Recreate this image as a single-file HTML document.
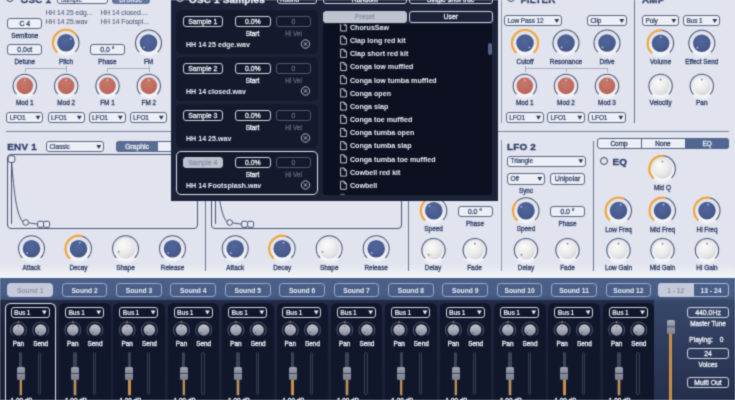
<!DOCTYPE html>
<html><head><meta charset="utf-8"><title>Synth</title><style>
html,body{margin:0;padding:0}
body{width:735px;height:400px;overflow:hidden;position:relative;background:#e1e4ee;font-family:"Liberation Sans",sans-serif;color:#34446b}
.layer{position:absolute;left:0;top:0;width:735px;height:400px;overflow:hidden}
.wrap{position:absolute;left:-10px;top:-10px;width:755px;height:420px;filter:url(#soft)}
.wrap>.layer{left:10px;top:10px}
.r{position:absolute}
.bx{position:absolute;box-sizing:border-box;border:1px solid #5b6684;border-radius:3px;background:#eceff5}
.bx.fill{background:#52668f;border-color:#52668f}
.bx.sq{border-radius:3px 0 0 3px}
.bx.sqr{border-radius:0 3px 3px 0}
.bx.dk{background:transparent;border-color:#d0d5e1}
.bx.dimb{border-color:#4f576c}
.bx.seld{background:#bfc3cf;border-color:#bfc3cf}
.bx.tab{background:transparent;border-color:#9aabcd;border-radius:3.5px}
.bx.tab.tsel{background:#c4cad9;border-color:#c4cad9}
.bx.tab.sq{border-radius:3px 0 0 3px}
text{font-family:"Liberation Sans",sans-serif;font-weight:normal;color:#34446b;fill:currentColor;stroke:currentColor;stroke-width:.32px;font-size:6.4px}
.lbw,.btw,.fnw,.li,.pl,.ddw,.ttlw{color:#eef0f6}
.dim{color:#59617a}
.lt,.btfill{color:#e9edf6}
.bt,.btw,.btdim,.btsel,.btfill{font-size:6.9px;stroke-width:.3px}
.bt{color:#3a4a70}
.btdim{color:#5d6579}
.btsel{color:#8d93a5}
.ddt{font-size:6.5px;letter-spacing:-.1px;stroke-width:.22px}
.ddw{font-size:6.4px;font-weight:bold;stroke-width:0;letter-spacing:-.2px;word-spacing:-.3px}
.fn{font-size:6.7px;color:#596584;stroke-width:.12px}
.fnw{font-size:7.1px;font-weight:bold;stroke-width:0}
.li{font-size:7.1px;font-weight:bold;stroke-width:0}
.pl{font-size:6.6px}
.tab{font-size:6.7px;color:#eef1f8;font-weight:bold;stroke-width:0}
.tabsel{font-size:6.7px;color:#8a93a8;font-weight:bold;stroke-width:0}
.ttl,.ttlw{font-size:9.9px;font-weight:bold;letter-spacing:.22px;stroke-width:.35px}
.ttl{color:#2f3f68}
</style></head><body>
<svg width="0" height="0" style="position:absolute"><defs><filter id="soft" x="0" y="0" width="100%" height="100%" color-interpolation-filters="sRGB"><feConvolveMatrix order="3" kernelMatrix="0.03 0.115 0.03 0.115 0.42 0.115 0.03 0.115 0.03" edgeMode="duplicate" preserveAlpha="true"/></filter></defs></svg>
<div class="wrap"><div class="r" style="left:0;top:0;width:755px;height:420px;background:#e1e4ee"></div><div class="layer" style="overflow:visible"><div class="r" style="left:0px;top:264px;width:735px;height:15px;background:linear-gradient(#e1e4ee,#f4f6fa)"></div><div class="r" style="left:6px;top:-6px;width:8px;height:8px;border:1px solid #34446b;border-radius:50%;box-sizing:border-box"></div><div class="bx " style="left:57px;top:-8px;width:50.5px;height:11.5px"></div><div class="bx fill" style="left:112px;top:-8px;width:37.5px;height:11.5px;background:#6276a0;border-color:#6276a0"></div><div class="r" style="left:507px;top:-6px;width:8px;height:8px;border:1px solid #34446b;border-radius:50%;box-sizing:border-box"></div><div class="bx " style="left:7.3px;top:17.8px;width:35px;height:11.2px;"></div><div class="bx " style="left:7.3px;top:44.3px;width:35px;height:11.2px;"></div><div class="bx " style="left:89.8px;top:44.3px;width:35.2px;height:11.2px;"></div><div class="r" style="left:24.5px;top:68.2px;width:42.5px;height:1px;background:#a9b0c4"></div><div class="r" style="left:24.5px;top:68.2px;width:1px;height:4px;background:#a9b0c4"></div><div class="r" style="left:66px;top:68.2px;width:1px;height:4px;background:#a9b0c4"></div><div class="r" style="left:66px;top:65.7px;width:1px;height:2.5px;background:#a9b0c4"></div><div class="r" style="left:107px;top:68.2px;width:42.5px;height:1px;background:#a9b0c4"></div><div class="r" style="left:107px;top:68.2px;width:1px;height:4px;background:#a9b0c4"></div><div class="r" style="left:148.5px;top:68.2px;width:1px;height:4px;background:#a9b0c4"></div><div class="r" style="left:148.5px;top:65.7px;width:1px;height:2.5px;background:#a9b0c4"></div><div class="bx " style="left:6.2px;top:112px;width:37px;height:11px"></div><div class="bx " style="left:47.5px;top:112px;width:37px;height:11px"></div><div class="bx " style="left:88.5px;top:112px;width:37px;height:11px"></div><div class="bx " style="left:129.5px;top:112px;width:37px;height:11px"></div><div class="r" style="left:6px;top:131.3px;width:166px;height:1px;background:#76819f"></div><div class="bx " style="left:46px;top:141px;width:58px;height:11.2px"></div><div class="r" style="left:116px;top:141px;width:86px;height:11.2px;border:1px solid #4f5f84;border-radius:3px;box-sizing:border-box;background:#eceff5"></div><div class="bx fill sq" style="left:116px;top:141px;width:42px;height:11.2px;background:#5a6c93;border-color:#5a6c93"></div><div class="r" style="left:7px;top:154px;width:191px;height:74.5px;border:1px solid #4a5674;border-radius:4px;box-sizing:border-box"></div><div class="r" style="left:211px;top:154px;width:191px;height:74.5px;border:1px solid #4a5674;border-radius:4px;box-sizing:border-box"></div><div class="r" style="left:204.5px;top:140px;width:1px;height:131px;background:#6a7593"></div><div class="r" style="left:408px;top:140px;width:1px;height:131px;background:#6a7593"></div><div class="bx " style="left:457.5px;top:206.3px;width:35px;height:10.5px;"></div><div class="r" style="left:501px;top:0px;width:1px;height:123px;background:#8d97b0"></div><div class="r" style="left:501px;top:140px;width:1px;height:131px;background:#8d97b0"></div><div class="bx " style="left:504px;top:15px;width:58px;height:11.2px"></div><div class="bx " style="left:587px;top:15px;width:40px;height:11.2px"></div><div class="r" style="left:524.8px;top:68.2px;width:83.20000000000005px;height:1px;background:#a9b0c4"></div><div class="r" style="left:524.8px;top:68.2px;width:1px;height:4px;background:#a9b0c4"></div><div class="r" style="left:566px;top:68.2px;width:1px;height:4px;background:#a9b0c4"></div><div class="r" style="left:607px;top:68.2px;width:1px;height:4px;background:#a9b0c4"></div><div class="r" style="left:524.8px;top:65.7px;width:1px;height:2.5px;background:#a9b0c4"></div><div class="bx " style="left:505.7px;top:112px;width:38px;height:11px"></div><div class="bx " style="left:547px;top:112px;width:38px;height:11px"></div><div class="bx " style="left:588px;top:112px;width:38px;height:11px"></div><div class="r" style="left:634px;top:0px;width:1px;height:123px;background:#6a7593"></div><div class="bx " style="left:642px;top:15px;width:37px;height:11.2px"></div><div class="bx " style="left:683px;top:15px;width:37px;height:11.2px"></div><div class="r" style="left:498px;top:130.6px;width:231px;height:1px;background:#76819f"></div><div class="bx " style="left:507px;top:155.5px;width:79px;height:11px"></div><div class="bx " style="left:507px;top:173px;width:38px;height:11.5px"></div><div class="bx " style="left:550px;top:173px;width:35px;height:11.5px;"></div><div class="bx " style="left:550px;top:206.3px;width:35px;height:10.5px;"></div><div class="r" style="left:593px;top:141px;width:1px;height:130px;background:#6a7593"></div><div class="r" style="left:597px;top:137.5px;width:131.5px;height:11.5px;border:1px solid #4f5f84;border-radius:3px;box-sizing:border-box;background:#eceff5"></div><div class="r" style="left:641px;top:137.5px;width:1px;height:11.5px;background:#4f5f84"></div><div class="bx fill sqr" style="left:685px;top:137.5px;width:43.5px;height:11.5px;"></div><div class="r" style="left:600.2px;top:157.2px;width:8px;height:8px;border:1px solid #34446b;border-radius:50%;box-sizing:border-box"></div></div>
<svg class="layer" width="735" height="400" viewBox="0 0 735 400"><defs>
<radialGradient id="gb" cx=".45" cy=".35" r=".75"><stop offset="0" stop-color="#51669c"/><stop offset=".7" stop-color="#475a8d"/><stop offset="1" stop-color="#3c4c7b"/></radialGradient>
<radialGradient id="gr" cx=".45" cy=".35" r=".75"><stop offset="0" stop-color="#c9786c"/><stop offset=".7" stop-color="#bd695d"/><stop offset="1" stop-color="#ab5c52"/></radialGradient>
<radialGradient id="gw" cx=".38" cy=".3" r=".8"><stop offset="0" stop-color="#fbfbfa"/><stop offset=".55" stop-color="#eaeae9"/><stop offset=".85" stop-color="#dbdbdf"/><stop offset="1" stop-color="#b6b8c4"/></radialGradient>
<linearGradient id="gg" x1="0" y1="0" x2="0" y2="1"><stop offset="0" stop-color="#c4c7ce"/><stop offset=".55" stop-color="#a3a7b2"/><stop offset="1" stop-color="#80859a"/></linearGradient>
<clipPath id="lc"><rect x="323" y="24" width="169" height="170.5"/></clipPath>
<filter id="bl" x="-50%" y="-50%" width="200%" height="200%"><feGaussianBlur stdDeviation="1.6"/></filter>
</defs><text class="ttl" x="20.50" y="2.50">OSC 1</text><text class="ddt" x="60.50" y="2.33">Sample</text><path d="M99.90 -3.95h4.8l-2.4 4z" fill="#2c3857"/><text class="btfill" x="130.75" y="2.47" text-anchor="middle">Browse</text><text class="ttl" x="520.50" y="2.50">FILTER</text><text class="ttl" x="642.00" y="2.50">AMP</text><text class="fn" x="45.50" y="15.10">HH 14 25 edg...</text><text class="fn" x="45.50" y="24.10">HH 14 25.wav</text><text class="fn" x="100.50" y="15.10">HH 14 closed....</text><text class="fn" x="100.50" y="24.10">HH 14 Footspl...</text><text class="bt" x="24.80" y="25.87" text-anchor="middle">C 4</text><text class="lb" x="24.80" y="37.59" text-anchor="middle">Semitone</text><text class="bt" x="24.80" y="52.37" text-anchor="middle">0.0ct</text><text class="lb" x="24.80" y="64.29" text-anchor="middle">Detune</text><ellipse cx="66" cy="46.3" rx="10.3" ry="9.3" fill="#fbfcff" opacity=".75" filter="url(#bl)"/><path d="M56.81 51.99A13 13 0 1 1 75.19 51.99" fill="none" stroke="#4a5472" stroke-width="1.05"/><path d="M56.81 51.99A13 13 0 1 1 75.66 34.10" fill="none" stroke="#f3a63c" stroke-width="2.2" stroke-linecap="round"/><circle cx="66" cy="42.8" r="8.8" fill="url(#gb)"/><circle cx="70.61" cy="38.65" r="0.9" fill="#aebcf0"/><text class="lb" x="66.00" y="64.29" text-anchor="middle">Pitch</text><text class="bt" x="107.40" y="52.37" text-anchor="middle">0.0 °</text><text class="lb" x="107.40" y="64.29" text-anchor="middle">Phase</text><ellipse cx="148.5" cy="46.5" rx="10.3" ry="9.3" fill="#fbfcff" opacity=".75" filter="url(#bl)"/><path d="M139.31 52.19A13 13 0 1 1 157.69 52.19" fill="none" stroke="#4a5472" stroke-width="1.05"/><circle cx="148.5" cy="43" r="8.8" fill="url(#gb)"/><circle cx="144.12" cy="47.38" r="0.9" fill="#aebcf0"/><text class="lb" x="148.50" y="64.29" text-anchor="middle">FM</text><ellipse cx="24.8" cy="89.4" rx="9.8" ry="8.8" fill="#fbfcff" opacity=".75" filter="url(#bl)"/><path d="M16.53 94.17A11.7 11.7 0 1 1 33.07 94.17" fill="none" stroke="#4a5472" stroke-width="1.05"/><circle cx="24.8" cy="85.9" r="8.3" fill="url(#gr)"/><circle cx="24.80" cy="80.20" r="0.9" fill="#efb3a2"/><text class="lb" x="24.80" y="105.19" text-anchor="middle">Mod 1</text><ellipse cx="66.2" cy="89.4" rx="9.8" ry="8.8" fill="#fbfcff" opacity=".75" filter="url(#bl)"/><path d="M57.93 94.17A11.7 11.7 0 1 1 74.47 94.17" fill="none" stroke="#4a5472" stroke-width="1.05"/><circle cx="66.2" cy="85.9" r="8.3" fill="url(#gr)"/><circle cx="66.20" cy="80.20" r="0.9" fill="#efb3a2"/><text class="lb" x="66.20" y="105.19" text-anchor="middle">Mod 2</text><ellipse cx="107.5" cy="89.4" rx="9.8" ry="8.8" fill="#fbfcff" opacity=".75" filter="url(#bl)"/><path d="M99.23 94.17A11.7 11.7 0 1 1 115.77 94.17" fill="none" stroke="#4a5472" stroke-width="1.05"/><circle cx="107.5" cy="85.9" r="8.3" fill="url(#gr)"/><circle cx="107.50" cy="80.20" r="0.9" fill="#efb3a2"/><text class="lb" x="107.50" y="105.19" text-anchor="middle">FM 1</text><ellipse cx="148.8" cy="89.4" rx="9.8" ry="8.8" fill="#fbfcff" opacity=".75" filter="url(#bl)"/><path d="M140.53 94.17A11.7 11.7 0 1 1 157.07 94.17" fill="none" stroke="#4a5472" stroke-width="1.05"/><circle cx="148.8" cy="85.9" r="8.3" fill="url(#gr)"/><circle cx="148.80" cy="80.20" r="0.9" fill="#efb3a2"/><text class="lb" x="148.80" y="105.19" text-anchor="middle">FM 2</text><text class="ddt" x="9.70" y="119.83">LFO1</text><path d="M35.60 115.80h4.8l-2.4 4z" fill="#2c3857"/><text class="ddt" x="51.00" y="119.83">LFO1</text><path d="M76.90 115.80h4.8l-2.4 4z" fill="#2c3857"/><text class="ddt" x="92.00" y="119.83">LFO1</text><path d="M117.90 115.80h4.8l-2.4 4z" fill="#2c3857"/><text class="ddt" x="133.00" y="119.83">LFO1</text><path d="M158.90 115.80h4.8l-2.4 4z" fill="#2c3857"/><text class="ttl" x="7.30" y="149.70">ENV 1</text><text class="ddt" x="49.50" y="148.93">Classic</text><path d="M96.40 144.90h4.8l-2.4 4z" fill="#2c3857"/><text class="btfill" x="137.00" y="149.07" text-anchor="middle">Graphic</text><g stroke="#4a5674" stroke-width="1" fill="none"><path d="M11.5 158.5V224"/><path d="M11.5 160C14 195 17 216 23 222"/><path d="M28.5 222.8L37.6 224.2"/></g><g stroke="#4a5674" stroke-width="1" fill="#e6e9f2"><rect x="8.2" y="155.8" width="6.6" height="6.6" rx="1.6"/><circle cx="25.7" cy="222.5" r="2.8"/><rect x="37.6" y="221.3" width="6" height="6" rx="1.5"/><rect x="43.6" y="221.3" width="6" height="6" rx="1.5"/></g><g stroke="#4a5674" stroke-width="1" fill="none"><path d="M215.5 158.5V224"/><path d="M215.5 160C218 195 221 216 227 222"/><path d="M232.5 222.8L241.6 224.2"/></g><g stroke="#4a5674" stroke-width="1" fill="#e6e9f2"><rect x="212.2" y="155.8" width="6.6" height="6.6" rx="1.6"/><circle cx="229.7" cy="222.5" r="2.8"/><rect x="241.6" y="221.3" width="6" height="6" rx="1.5"/><rect x="247.6" y="221.3" width="6" height="6" rx="1.5"/></g><ellipse cx="31.5" cy="252.2" rx="10.3" ry="9.3" fill="#fbfcff" opacity=".75" filter="url(#bl)"/><path d="M22.31 257.89A13 13 0 1 1 40.69 257.89" fill="none" stroke="#4a5472" stroke-width="1.05"/><circle cx="31.5" cy="248.7" r="8.8" fill="url(#gb)"/><circle cx="27.12" cy="253.08" r="0.9" fill="#aebcf0"/><text class="lb" x="31.50" y="269.99" text-anchor="middle">Attack</text><ellipse cx="78.5" cy="252.2" rx="10.3" ry="9.3" fill="#fbfcff" opacity=".75" filter="url(#bl)"/><path d="M69.31 257.89A13 13 0 1 1 87.69 257.89" fill="none" stroke="#4a5472" stroke-width="1.05"/><path d="M69.31 257.89A13 13 0 0 1 81.20 235.98" fill="none" stroke="#f3a63c" stroke-width="2.2" stroke-linecap="round"/><circle cx="78.5" cy="248.7" r="8.8" fill="url(#gb)"/><circle cx="79.79" cy="242.64" r="0.9" fill="#aebcf0"/><text class="lb" x="78.50" y="269.99" text-anchor="middle">Decay</text><ellipse cx="125.5" cy="252.2" rx="11.5" ry="10.5" fill="#fbfcff" opacity=".75" filter="url(#bl)"/><path d="M116.31 257.89A13 13 0 1 1 134.69 257.89" fill="none" stroke="#4a5472" stroke-width="1.05"/><circle cx="125.5" cy="248.7" r="10" fill="url(#gw)"/><circle cx="118.79" cy="251.83" r="0.9" fill="#7d8496"/><text class="lb" x="125.50" y="269.99" text-anchor="middle">Shape</text><ellipse cx="172.5" cy="252.2" rx="10.3" ry="9.3" fill="#fbfcff" opacity=".75" filter="url(#bl)"/><path d="M163.31 257.89A13 13 0 1 1 181.69 257.89" fill="none" stroke="#4a5472" stroke-width="1.05"/><circle cx="172.5" cy="248.7" r="8.8" fill="url(#gb)"/><circle cx="168.12" cy="253.08" r="0.9" fill="#aebcf0"/><text class="lb" x="172.50" y="269.99" text-anchor="middle">Release</text><ellipse cx="235.2" cy="252.2" rx="10.3" ry="9.3" fill="#fbfcff" opacity=".75" filter="url(#bl)"/><path d="M226.01 257.89A13 13 0 1 1 244.39 257.89" fill="none" stroke="#4a5472" stroke-width="1.05"/><circle cx="235.2" cy="248.7" r="8.8" fill="url(#gb)"/><circle cx="230.82" cy="253.08" r="0.9" fill="#aebcf0"/><text class="lb" x="235.20" y="269.99" text-anchor="middle">Attack</text><ellipse cx="282.2" cy="252.2" rx="10.3" ry="9.3" fill="#fbfcff" opacity=".75" filter="url(#bl)"/><path d="M273.01 257.89A13 13 0 1 1 291.39 257.89" fill="none" stroke="#4a5472" stroke-width="1.05"/><path d="M273.01 257.89A13 13 0 0 1 284.90 235.98" fill="none" stroke="#f3a63c" stroke-width="2.2" stroke-linecap="round"/><circle cx="282.2" cy="248.7" r="8.8" fill="url(#gb)"/><circle cx="283.49" cy="242.64" r="0.9" fill="#aebcf0"/><text class="lb" x="282.20" y="269.99" text-anchor="middle">Decay</text><ellipse cx="329.2" cy="252.2" rx="11.5" ry="10.5" fill="#fbfcff" opacity=".75" filter="url(#bl)"/><path d="M320.01 257.89A13 13 0 1 1 338.39 257.89" fill="none" stroke="#4a5472" stroke-width="1.05"/><circle cx="329.2" cy="248.7" r="10" fill="url(#gw)"/><circle cx="322.49" cy="251.83" r="0.9" fill="#7d8496"/><text class="lb" x="329.20" y="269.99" text-anchor="middle">Shape</text><ellipse cx="376.2" cy="252.2" rx="10.3" ry="9.3" fill="#fbfcff" opacity=".75" filter="url(#bl)"/><path d="M367.01 257.89A13 13 0 1 1 385.39 257.89" fill="none" stroke="#4a5472" stroke-width="1.05"/><circle cx="376.2" cy="248.7" r="8.8" fill="url(#gb)"/><circle cx="371.82" cy="253.08" r="0.9" fill="#aebcf0"/><text class="lb" x="376.20" y="269.99" text-anchor="middle">Release</text><ellipse cx="433.8" cy="214.2" rx="10.3" ry="9.3" fill="#fbfcff" opacity=".75" filter="url(#bl)"/><path d="M424.61 219.89A13 13 0 1 1 442.99 219.89" fill="none" stroke="#4a5472" stroke-width="1.05"/><path d="M424.61 219.89A13 13 0 0 1 425.10 201.04" fill="none" stroke="#f3a63c" stroke-width="2.2" stroke-linecap="round"/><circle cx="433.8" cy="210.7" r="8.8" fill="url(#gb)"/><circle cx="429.65" cy="206.09" r="0.9" fill="#aebcf0"/><text class="lb" x="433.60" y="231.49" text-anchor="middle">Speed</text><text class="bt" x="475.00" y="214.02" text-anchor="middle">0.0 °</text><text class="lb" x="475.00" y="225.59" text-anchor="middle">Phase</text><ellipse cx="433.5" cy="253.7" rx="10.6" ry="9.6" fill="#fbfcff" opacity=".75" filter="url(#bl)"/><path d="M425.23 258.47A11.7 11.7 0 1 1 441.77 258.47" fill="none" stroke="#4a5472" stroke-width="1.05"/><circle cx="433.5" cy="250.2" r="9.1" fill="url(#gw)"/><circle cx="428.90" cy="254.80" r="0.9" fill="#7d8496"/><text class="lb" x="433.00" y="269.79" text-anchor="middle">Delay</text><ellipse cx="474.8" cy="253.7" rx="10.6" ry="9.6" fill="#fbfcff" opacity=".75" filter="url(#bl)"/><path d="M466.53 258.47A11.7 11.7 0 1 1 483.07 258.47" fill="none" stroke="#4a5472" stroke-width="1.05"/><circle cx="474.8" cy="250.2" r="9.1" fill="url(#gw)"/><circle cx="474.80" cy="243.70" r="0.9" fill="#7d8496"/><text class="lb" x="474.50" y="269.79" text-anchor="middle">Fade</text><text class="ddt" x="507.50" y="22.93">Low Pass 12</text><path d="M554.40 18.90h4.8l-2.4 4z" fill="#2c3857"/><text class="ddt" x="590.50" y="22.93">Clip</text><path d="M619.40 18.90h4.8l-2.4 4z" fill="#2c3857"/><ellipse cx="525" cy="46.5" rx="10.3" ry="9.3" fill="#fbfcff" opacity=".75" filter="url(#bl)"/><path d="M515.81 52.19A13 13 0 1 1 534.19 52.19" fill="none" stroke="#4a5472" stroke-width="1.05"/><path d="M515.81 52.19A13 13 0 1 1 534.19 52.19" fill="none" stroke="#f3a63c" stroke-width="2.2" stroke-linecap="round"/><circle cx="525" cy="43" r="8.8" fill="url(#gb)"/><circle cx="529.38" cy="47.38" r="0.9" fill="#aebcf0"/><text class="lb" x="525.00" y="64.29" text-anchor="middle">Cutoff</text><ellipse cx="566" cy="46.5" rx="10.3" ry="9.3" fill="#fbfcff" opacity=".75" filter="url(#bl)"/><path d="M556.81 52.19A13 13 0 1 1 575.19 52.19" fill="none" stroke="#4a5472" stroke-width="1.05"/><circle cx="566" cy="43" r="8.8" fill="url(#gb)"/><circle cx="561.62" cy="47.38" r="0.9" fill="#aebcf0"/><text class="lb" x="566.00" y="64.29" text-anchor="middle">Resonance</text><ellipse cx="607" cy="46.5" rx="10.3" ry="9.3" fill="#fbfcff" opacity=".75" filter="url(#bl)"/><path d="M597.81 52.19A13 13 0 1 1 616.19 52.19" fill="none" stroke="#4a5472" stroke-width="1.05"/><circle cx="607" cy="43" r="8.8" fill="url(#gb)"/><circle cx="602.62" cy="47.38" r="0.9" fill="#aebcf0"/><text class="lb" x="607.00" y="64.29" text-anchor="middle">Drive</text><ellipse cx="524.8" cy="89.4" rx="9.8" ry="8.8" fill="#fbfcff" opacity=".75" filter="url(#bl)"/><path d="M516.53 94.17A11.7 11.7 0 1 1 533.07 94.17" fill="none" stroke="#4a5472" stroke-width="1.05"/><circle cx="524.8" cy="85.9" r="8.3" fill="url(#gr)"/><circle cx="524.80" cy="80.20" r="0.9" fill="#efb3a2"/><text class="lb" x="524.80" y="105.19" text-anchor="middle">Mod 1</text><ellipse cx="566" cy="89.4" rx="9.8" ry="8.8" fill="#fbfcff" opacity=".75" filter="url(#bl)"/><path d="M557.73 94.17A11.7 11.7 0 1 1 574.27 94.17" fill="none" stroke="#4a5472" stroke-width="1.05"/><circle cx="566" cy="85.9" r="8.3" fill="url(#gr)"/><circle cx="566.00" cy="80.20" r="0.9" fill="#efb3a2"/><text class="lb" x="566.00" y="105.19" text-anchor="middle">Mod 2</text><ellipse cx="607" cy="89.4" rx="9.8" ry="8.8" fill="#fbfcff" opacity=".75" filter="url(#bl)"/><path d="M598.73 94.17A11.7 11.7 0 1 1 615.27 94.17" fill="none" stroke="#4a5472" stroke-width="1.05"/><circle cx="607" cy="85.9" r="8.3" fill="url(#gr)"/><circle cx="607.00" cy="80.20" r="0.9" fill="#efb3a2"/><text class="lb" x="607.00" y="105.19" text-anchor="middle">Mod 3</text><text class="ddt" x="509.20" y="119.83">LFO1</text><path d="M536.10 115.80h4.8l-2.4 4z" fill="#2c3857"/><text class="ddt" x="550.50" y="119.83">LFO1</text><path d="M577.40 115.80h4.8l-2.4 4z" fill="#2c3857"/><text class="ddt" x="591.50" y="119.83">LFO1</text><path d="M618.40 115.80h4.8l-2.4 4z" fill="#2c3857"/><text class="ddt" x="645.50" y="22.93">Poly</text><path d="M671.40 18.90h4.8l-2.4 4z" fill="#2c3857"/><text class="ddt" x="686.50" y="22.93">Bus 1</text><path d="M712.40 18.90h4.8l-2.4 4z" fill="#2c3857"/><ellipse cx="660.6" cy="46.8" rx="10.3" ry="9.3" fill="#fbfcff" opacity=".75" filter="url(#bl)"/><path d="M651.41 52.49A13 13 0 1 1 669.79 52.49" fill="none" stroke="#4a5472" stroke-width="1.05"/><path d="M651.41 52.49A13 13 0 0 1 661.05 30.31" fill="none" stroke="#f3a63c" stroke-width="2.2" stroke-linecap="round"/><circle cx="660.6" cy="43.3" r="8.8" fill="url(#gb)"/><circle cx="660.82" cy="37.10" r="0.9" fill="#aebcf0"/><text class="lb" x="660.60" y="64.29" text-anchor="middle">Volume</text><ellipse cx="701.8" cy="46.8" rx="10.3" ry="9.3" fill="#fbfcff" opacity=".75" filter="url(#bl)"/><path d="M692.61 52.49A13 13 0 1 1 710.99 52.49" fill="none" stroke="#4a5472" stroke-width="1.05"/><circle cx="701.8" cy="43.3" r="8.8" fill="url(#gb)"/><circle cx="697.42" cy="47.68" r="0.9" fill="#aebcf0"/><text class="lb" x="701.80" y="64.29" text-anchor="middle">Effect Send</text><ellipse cx="660.6" cy="89.5" rx="10.6" ry="9.6" fill="#fbfcff" opacity=".75" filter="url(#bl)"/><path d="M652.33 94.27A11.7 11.7 0 1 1 668.87 94.27" fill="none" stroke="#4a5472" stroke-width="1.05"/><circle cx="660.6" cy="86" r="9.1" fill="url(#gw)"/><circle cx="660.60" cy="79.50" r="0.9" fill="#7d8496"/><text class="lb" x="660.60" y="104.89" text-anchor="middle">Velocity</text><ellipse cx="701.8" cy="89.5" rx="10.6" ry="9.6" fill="#fbfcff" opacity=".75" filter="url(#bl)"/><path d="M693.53 94.27A11.7 11.7 0 1 1 710.07 94.27" fill="none" stroke="#4a5472" stroke-width="1.05"/><circle cx="701.8" cy="86" r="9.1" fill="url(#gw)"/><circle cx="701.80" cy="79.50" r="0.9" fill="#7d8496"/><text class="lb" x="701.80" y="104.89" text-anchor="middle">Pan</text><text class="ttl" x="507.00" y="149.70">LFO 2</text><text class="ddt" x="510.50" y="163.33">Triangle</text><path d="M578.40 159.30h4.8l-2.4 4z" fill="#2c3857"/><text class="ddt" x="510.50" y="181.08">Off</text><path d="M537.40 177.05h4.8l-2.4 4z" fill="#2c3857"/><text class="bt" x="567.50" y="181.22" text-anchor="middle">Unipolar</text><text class="lb" x="526.00" y="193.29" text-anchor="middle">Sync</text><ellipse cx="526" cy="214.2" rx="10.3" ry="9.3" fill="#fbfcff" opacity=".75" filter="url(#bl)"/><path d="M516.81 219.89A13 13 0 1 1 535.19 219.89" fill="none" stroke="#4a5472" stroke-width="1.05"/><path d="M516.81 219.89A13 13 0 0 1 516.04 202.34" fill="none" stroke="#f3a63c" stroke-width="2.2" stroke-linecap="round"/><circle cx="526" cy="210.7" r="8.8" fill="url(#gb)"/><circle cx="521.25" cy="206.71" r="0.9" fill="#aebcf0"/><text class="lb" x="526.00" y="231.49" text-anchor="middle">Speed</text><text class="bt" x="567.50" y="214.02" text-anchor="middle">0.0 °</text><text class="lb" x="567.50" y="225.59" text-anchor="middle">Phase</text><ellipse cx="526" cy="253.7" rx="10.6" ry="9.6" fill="#fbfcff" opacity=".75" filter="url(#bl)"/><path d="M517.73 258.47A11.7 11.7 0 1 1 534.27 258.47" fill="none" stroke="#4a5472" stroke-width="1.05"/><circle cx="526" cy="250.2" r="9.1" fill="url(#gw)"/><circle cx="521.40" cy="254.80" r="0.9" fill="#7d8496"/><text class="lb" x="526.00" y="269.79" text-anchor="middle">Delay</text><ellipse cx="567.5" cy="253.7" rx="10.6" ry="9.6" fill="#fbfcff" opacity=".75" filter="url(#bl)"/><path d="M559.23 258.47A11.7 11.7 0 1 1 575.77 258.47" fill="none" stroke="#4a5472" stroke-width="1.05"/><circle cx="567.5" cy="250.2" r="9.1" fill="url(#gw)"/><circle cx="567.50" cy="243.70" r="0.9" fill="#7d8496"/><text class="lb" x="567.50" y="269.79" text-anchor="middle">Fade</text><text class="lb" x="619.00" y="145.79" text-anchor="middle">Comp</text><text class="lb" x="663.00" y="145.79" text-anchor="middle">None</text><text class="lt" x="707.00" y="145.79" text-anchor="middle">EQ</text><text class="ttl" x="612.50" y="164.60">EQ</text><ellipse cx="662.4" cy="172.3" rx="11.3" ry="10.3" fill="#fbfcff" opacity=".75" filter="url(#bl)"/><path d="M653.21 177.99A13 13 0 1 1 671.59 177.99" fill="none" stroke="#4a5472" stroke-width="1.05"/><path d="M653.21 177.99A13 13 0 0 1 662.40 155.80" fill="none" stroke="#f3a63c" stroke-width="2.2" stroke-linecap="round"/><circle cx="662.4" cy="168.8" r="9.8" fill="url(#gw)"/><circle cx="662.40" cy="161.60" r="0.9" fill="#7d8496"/><text class="lb" x="662.40" y="190.49" text-anchor="middle">Mid Q</text><ellipse cx="618.5" cy="214.1" rx="10.3" ry="9.3" fill="#fbfcff" opacity=".75" filter="url(#bl)"/><path d="M609.31 219.79A13 13 0 1 1 627.69 219.79" fill="none" stroke="#4a5472" stroke-width="1.05"/><path d="M609.31 219.79A13 13 0 0 1 622.95 198.38" fill="none" stroke="#f3a63c" stroke-width="2.2" stroke-linecap="round"/><circle cx="618.5" cy="210.6" r="8.8" fill="url(#gb)"/><circle cx="620.62" cy="204.77" r="0.9" fill="#aebcf0"/><text class="lb" x="618.50" y="231.59" text-anchor="middle">Low Freq</text><ellipse cx="662.5" cy="214.1" rx="10.3" ry="9.3" fill="#fbfcff" opacity=".75" filter="url(#bl)"/><path d="M653.31 219.79A13 13 0 1 1 671.69 219.79" fill="none" stroke="#4a5472" stroke-width="1.05"/><path d="M653.31 219.79A13 13 0 0 1 664.76 197.80" fill="none" stroke="#f3a63c" stroke-width="2.2" stroke-linecap="round"/><circle cx="662.5" cy="210.6" r="8.8" fill="url(#gb)"/><circle cx="663.58" cy="204.49" r="0.9" fill="#aebcf0"/><text class="lb" x="662.50" y="231.59" text-anchor="middle">Mid Freq</text><ellipse cx="707" cy="214.1" rx="10.3" ry="9.3" fill="#fbfcff" opacity=".75" filter="url(#bl)"/><path d="M697.81 219.79A13 13 0 1 1 716.19 219.79" fill="none" stroke="#4a5472" stroke-width="1.05"/><path d="M697.81 219.79A13 13 0 0 1 709.26 197.80" fill="none" stroke="#f3a63c" stroke-width="2.2" stroke-linecap="round"/><circle cx="707" cy="210.6" r="8.8" fill="url(#gb)"/><circle cx="708.08" cy="204.49" r="0.9" fill="#aebcf0"/><text class="lb" x="707.00" y="231.59" text-anchor="middle">Hi Freq</text><ellipse cx="618.5" cy="253.7" rx="10.6" ry="9.6" fill="#fbfcff" opacity=".75" filter="url(#bl)"/><path d="M610.23 258.47A11.7 11.7 0 1 1 626.77 258.47" fill="none" stroke="#4a5472" stroke-width="1.05"/><circle cx="618.5" cy="250.2" r="9.1" fill="url(#gw)"/><circle cx="618.50" cy="243.70" r="0.9" fill="#7d8496"/><text class="lb" x="618.50" y="269.89" text-anchor="middle">Low Gain</text><ellipse cx="662.5" cy="253.7" rx="10.6" ry="9.6" fill="#fbfcff" opacity=".75" filter="url(#bl)"/><path d="M654.23 258.47A11.7 11.7 0 1 1 670.77 258.47" fill="none" stroke="#4a5472" stroke-width="1.05"/><circle cx="662.5" cy="250.2" r="9.1" fill="url(#gw)"/><circle cx="662.50" cy="243.70" r="0.9" fill="#7d8496"/><text class="lb" x="662.50" y="269.89" text-anchor="middle">Mid Gain</text><ellipse cx="707" cy="253.7" rx="10.6" ry="9.6" fill="#fbfcff" opacity=".75" filter="url(#bl)"/><path d="M698.73 258.47A11.7 11.7 0 1 1 715.27 258.47" fill="none" stroke="#4a5472" stroke-width="1.05"/><circle cx="707" cy="250.2" r="9.1" fill="url(#gw)"/><circle cx="707.00" cy="243.70" r="0.9" fill="#7d8496"/><text class="lb" x="707.00" y="269.89" text-anchor="middle">Hi Gain</text></svg>
<div class="layer"><div class="r" style="left:170.5px;top:-5px;width:327.5px;height:205.5px;background:#1c2338"></div><div class="r" style="left:176px;top:-6px;width:8px;height:8px;border:1px solid #e6e9f2;border-radius:50%;box-sizing:border-box"></div><div class="bx dk" style="left:276.5px;top:-8px;width:40px;height:11.5px"></div><div class="bx dk" style="left:323px;top:-8px;width:83.5px;height:11.5px;"></div><div class="bx dk" style="left:409px;top:-8px;width:83.5px;height:11.5px;"></div><div class="r" style="left:176px;top:10px;width:141.5px;height:43.5px;background:#141a2c;border-radius:5px;"></div><div class="bx dk" style="left:182.5px;top:16.2px;width:40.5px;height:11.3px;"></div><div class="bx dk" style="left:235px;top:16.2px;width:35.5px;height:11.3px;"></div><div class="bx dk dimb" style="left:276px;top:16.2px;width:35px;height:11.3px;"></div><div class="r" style="left:176px;top:57px;width:141.5px;height:43.5px;background:#141a2c;border-radius:5px;"></div><div class="bx dk" style="left:182.5px;top:63.2px;width:40.5px;height:11.3px;"></div><div class="bx dk" style="left:235px;top:63.2px;width:35.5px;height:11.3px;"></div><div class="bx dk dimb" style="left:276px;top:63.2px;width:35px;height:11.3px;"></div><div class="r" style="left:176px;top:104px;width:141.5px;height:43.5px;background:#141a2c;border-radius:5px;"></div><div class="bx dk" style="left:182.5px;top:110.2px;width:40.5px;height:11.3px;"></div><div class="bx dk" style="left:235px;top:110.2px;width:35.5px;height:11.3px;"></div><div class="bx dk dimb" style="left:276px;top:110.2px;width:35px;height:11.3px;"></div><div class="r" style="left:176px;top:151.3px;width:141.5px;height:43.9px;background:#141a2c;border-radius:5px;border:1px solid #dfe3ee;box-sizing:border-box;"></div><div class="bx seld" style="left:182.5px;top:157.2px;width:40.5px;height:11.3px;"></div><div class="bx dk" style="left:235px;top:157.2px;width:35.5px;height:11.3px;"></div><div class="bx dk dimb" style="left:276px;top:157.2px;width:35px;height:11.3px;"></div><div class="bx seld" style="left:323px;top:11.1px;width:83.5px;height:11.5px;"></div><div class="bx dk" style="left:409px;top:11.3px;width:83.5px;height:11.3px;"></div><div class="r" style="left:323px;top:24px;width:169px;height:170.5px;background:#0c1020;border-radius:0 0 3px 3px"></div><div class="r" style="left:488px;top:43px;width:3.5px;height:11.5px;background:#52628a;border-radius:2px"></div></div>
<svg class="layer" width="735" height="400" viewBox="0 0 735 400"><text class="ttlw" x="189.00" y="2.70">OSC 1 Samples</text><text class="ddw" x="280.00" y="2.29">Round</text><path d="M308.90 -3.95h4.8l-2.4 4z" fill="#eef0f6"/><text class="btw" x="364.75" y="2.47" text-anchor="middle">Random</text><text class="btw" x="450.75" y="2.47" text-anchor="middle">Single shot true</text><text class="btw" x="202.75" y="24.32" text-anchor="middle">Sample 1</text><text class="btw" x="252.75" y="24.32" text-anchor="middle">0.0%</text><text class="btdim" x="293.50" y="24.32" text-anchor="middle">0</text><text class="lbw" x="252.50" y="35.59" text-anchor="middle">Start</text><text class="dim" x="293.50" y="35.59" text-anchor="middle">Hi Vel</text><text class="fnw" x="186.00" y="46.74">HH 14 25 edge.wav</text><g stroke="#c9cedb" stroke-width="0.85" fill="none"><circle cx="305.5" cy="44" r="4.2"/><path d="M303.6 42.1l3.8 3.8M307.4 42.1l-3.8 3.8"/></g><text class="btw" x="202.75" y="71.32" text-anchor="middle">Sample 2</text><text class="btw" x="252.75" y="71.32" text-anchor="middle">0.0%</text><text class="btdim" x="293.50" y="71.32" text-anchor="middle">0</text><text class="lbw" x="252.50" y="82.59" text-anchor="middle">Start</text><text class="dim" x="293.50" y="82.59" text-anchor="middle">Hi Vel</text><text class="fnw" x="186.00" y="93.74">HH 14 closed.wav</text><g stroke="#c9cedb" stroke-width="0.85" fill="none"><circle cx="305.5" cy="91" r="4.2"/><path d="M303.6 89.1l3.8 3.8M307.4 89.1l-3.8 3.8"/></g><text class="btw" x="202.75" y="118.32" text-anchor="middle">Sample 3</text><text class="btw" x="252.75" y="118.32" text-anchor="middle">0.0%</text><text class="btdim" x="293.50" y="118.32" text-anchor="middle">0</text><text class="lbw" x="252.50" y="129.59" text-anchor="middle">Start</text><text class="dim" x="293.50" y="129.59" text-anchor="middle">Hi Vel</text><text class="fnw" x="186.00" y="140.74">HH 14 25.wav</text><g stroke="#c9cedb" stroke-width="0.85" fill="none"><circle cx="305.5" cy="138" r="4.2"/><path d="M303.6 136.1l3.8 3.8M307.4 136.1l-3.8 3.8"/></g><text class="btsel" x="202.75" y="165.32" text-anchor="middle">Sample 4</text><text class="btw" x="252.75" y="165.32" text-anchor="middle">0.0%</text><text class="btdim" x="293.50" y="165.32" text-anchor="middle">0</text><text class="lbw" x="252.50" y="176.59" text-anchor="middle">Start</text><text class="dim" x="293.50" y="176.59" text-anchor="middle">Hi Vel</text><text class="fnw" x="186.00" y="187.74">HH 14 Footsplash.wav</text><g stroke="#c9cedb" stroke-width="0.85" fill="none"><circle cx="305.5" cy="185" r="4.2"/><path d="M303.6 183.1l3.8 3.8M307.4 183.1l-3.8 3.8"/></g><text class="btsel" x="364.75" y="19.32" text-anchor="middle">Preset</text><text class="btw" x="450.75" y="19.42" text-anchor="middle">User</text><g clip-path="url(#lc)"><text class="li" x="350.00" y="29.74">ChorusSaw</text><path d="M340.6 22.90h3.5l2.3 2.3v5.8h-5.8zM344.1 22.90v2.3h2.3" fill="none" stroke="#dfe3ec" stroke-width="0.85" stroke-linejoin="round"/><text class="li" x="350.00" y="42.93">Clap long red kit</text><path d="M340.6 36.09h3.5l2.3 2.3v5.8h-5.8zM344.1 36.09v2.3h2.3" fill="none" stroke="#dfe3ec" stroke-width="0.85" stroke-linejoin="round"/><text class="li" x="350.00" y="56.12">Clap short red kit</text><path d="M340.6 49.28h3.5l2.3 2.3v5.8h-5.8zM344.1 49.28v2.3h2.3" fill="none" stroke="#dfe3ec" stroke-width="0.85" stroke-linejoin="round"/><text class="li" x="350.00" y="69.31">Conga low muffled</text><path d="M340.6 62.47h3.5l2.3 2.3v5.8h-5.8zM344.1 62.47v2.3h2.3" fill="none" stroke="#dfe3ec" stroke-width="0.85" stroke-linejoin="round"/><text class="li" x="350.00" y="82.50">Conga low tumba muffled</text><path d="M340.6 75.66h3.5l2.3 2.3v5.8h-5.8zM344.1 75.66v2.3h2.3" fill="none" stroke="#dfe3ec" stroke-width="0.85" stroke-linejoin="round"/><text class="li" x="350.00" y="95.69">Conga open</text><path d="M340.6 88.85h3.5l2.3 2.3v5.8h-5.8zM344.1 88.85v2.3h2.3" fill="none" stroke="#dfe3ec" stroke-width="0.85" stroke-linejoin="round"/><text class="li" x="350.00" y="108.88">Conga slap</text><path d="M340.6 102.04h3.5l2.3 2.3v5.8h-5.8zM344.1 102.04v2.3h2.3" fill="none" stroke="#dfe3ec" stroke-width="0.85" stroke-linejoin="round"/><text class="li" x="350.00" y="122.07">Conga toe muffled</text><path d="M340.6 115.23h3.5l2.3 2.3v5.8h-5.8zM344.1 115.23v2.3h2.3" fill="none" stroke="#dfe3ec" stroke-width="0.85" stroke-linejoin="round"/><text class="li" x="350.00" y="135.26">Conga tumba open</text><path d="M340.6 128.42h3.5l2.3 2.3v5.8h-5.8zM344.1 128.42v2.3h2.3" fill="none" stroke="#dfe3ec" stroke-width="0.85" stroke-linejoin="round"/><text class="li" x="350.00" y="148.45">Conga tumba slap</text><path d="M340.6 141.61h3.5l2.3 2.3v5.8h-5.8zM344.1 141.61v2.3h2.3" fill="none" stroke="#dfe3ec" stroke-width="0.85" stroke-linejoin="round"/><text class="li" x="350.00" y="161.64">Conga tumba toe muffled</text><path d="M340.6 154.80h3.5l2.3 2.3v5.8h-5.8zM344.1 154.80v2.3h2.3" fill="none" stroke="#dfe3ec" stroke-width="0.85" stroke-linejoin="round"/><text class="li" x="350.00" y="174.83">Cowbell red kit</text><path d="M340.6 167.99h3.5l2.3 2.3v5.8h-5.8zM344.1 167.99v2.3h2.3" fill="none" stroke="#dfe3ec" stroke-width="0.85" stroke-linejoin="round"/><text class="li" x="350.00" y="188.02">Cowbell</text><path d="M340.6 181.18h3.5l2.3 2.3v5.8h-5.8zM344.1 181.18v2.3h2.3" fill="none" stroke="#dfe3ec" stroke-width="0.85" stroke-linejoin="round"/><text class="li" x="350.00" y="201.21">Cowbell muffled</text><path d="M340.6 194.37h3.5l2.3 2.3v5.8h-5.8zM344.1 194.37v2.3h2.3" fill="none" stroke="#dfe3ec" stroke-width="0.85" stroke-linejoin="round"/></g></svg>
<div class="layer"><div class="r" style="left:0px;top:278.3px;width:735px;height:21.4px;background:linear-gradient(#4b6089,#495e86 75%,#3d4f76)"></div><div class="r" style="left:0px;top:299.7px;width:735px;height:101px;background:linear-gradient(#222b47,#1c233c 25%,#191f36)"></div><div class="r" style="left:654px;top:300px;width:81px;height:100px;background:linear-gradient(#374869,#323f60 30%,#242f4b)"></div><div class="bx tab tsel" style="left:7.3px;top:283.3px;width:45.8px;height:13.7px;"></div><div class="r" style="left:4.6px;top:302.8px;width:51.5px;height:100px;background:#11172b;border-radius:5.5px 5.5px 0 0;border:1px solid #e1e5ef;border-bottom:none;box-sizing:border-box;"></div><div class="bx dk" style="left:10.5px;top:306.7px;width:39px;height:11.2px"></div><div class="r" style="left:18.8px;top:352px;width:3.6px;height:44px;background:#3a4358;border-radius:2px"></div><div class="r" style="left:19.5px;top:379px;width:2.3px;height:16px;background:#cb8f48"></div><div class="r" style="left:16.6px;top:366.5px;width:8px;height:13.5px;background:linear-gradient(#9ea3ad,#84899a 45%,#4a4f5e 50%,#8b909e 55%,#777c8b);border-radius:1.5px"></div><div class="r" style="left:38.1px;top:352px;width:3.4px;height:42.5px;border:0.8px solid #353e55;border-radius:2px;box-sizing:border-box;background:#141a2c"></div><div class="bx tab" style="left:61.7px;top:283.3px;width:45.8px;height:13.7px;"></div><div class="r" style="left:59.0px;top:302.8px;width:51.5px;height:100px;background:#11172b;border-radius:5.5px 5.5px 0 0;"></div><div class="bx dk" style="left:64.9px;top:306.7px;width:39px;height:11.2px"></div><div class="r" style="left:73.2px;top:352px;width:3.6px;height:44px;background:#3a4358;border-radius:2px"></div><div class="r" style="left:73.9px;top:379px;width:2.3px;height:16px;background:#cb8f48"></div><div class="r" style="left:71.0px;top:366.5px;width:8px;height:13.5px;background:linear-gradient(#9ea3ad,#84899a 45%,#4a4f5e 50%,#8b909e 55%,#777c8b);border-radius:1.5px"></div><div class="r" style="left:92.5px;top:352px;width:3.4px;height:42.5px;border:0.8px solid #353e55;border-radius:2px;box-sizing:border-box;background:#141a2c"></div><div class="bx tab" style="left:116.1px;top:283.3px;width:45.8px;height:13.7px;"></div><div class="r" style="left:113.4px;top:302.8px;width:51.5px;height:100px;background:#11172b;border-radius:5.5px 5.5px 0 0;"></div><div class="bx dk" style="left:119.3px;top:306.7px;width:39px;height:11.2px"></div><div class="r" style="left:127.6px;top:352px;width:3.6px;height:44px;background:#3a4358;border-radius:2px"></div><div class="r" style="left:128.3px;top:379px;width:2.3px;height:16px;background:#cb8f48"></div><div class="r" style="left:125.4px;top:366.5px;width:8px;height:13.5px;background:linear-gradient(#9ea3ad,#84899a 45%,#4a4f5e 50%,#8b909e 55%,#777c8b);border-radius:1.5px"></div><div class="r" style="left:146.9px;top:352px;width:3.4px;height:42.5px;border:0.8px solid #353e55;border-radius:2px;box-sizing:border-box;background:#141a2c"></div><div class="bx tab" style="left:170.4px;top:283.3px;width:45.8px;height:13.7px;"></div><div class="r" style="left:167.7px;top:302.8px;width:51.5px;height:100px;background:#11172b;border-radius:5.5px 5.5px 0 0;"></div><div class="bx dk" style="left:173.6px;top:306.7px;width:39px;height:11.2px"></div><div class="r" style="left:181.9px;top:352px;width:3.6px;height:44px;background:#3a4358;border-radius:2px"></div><div class="r" style="left:182.6px;top:379px;width:2.3px;height:16px;background:#cb8f48"></div><div class="r" style="left:179.7px;top:366.5px;width:8px;height:13.5px;background:linear-gradient(#9ea3ad,#84899a 45%,#4a4f5e 50%,#8b909e 55%,#777c8b);border-radius:1.5px"></div><div class="r" style="left:201.2px;top:352px;width:3.4px;height:42.5px;border:0.8px solid #353e55;border-radius:2px;box-sizing:border-box;background:#141a2c"></div><div class="bx tab" style="left:224.8px;top:283.3px;width:45.8px;height:13.7px;"></div><div class="r" style="left:222.1px;top:302.8px;width:51.5px;height:100px;background:#11172b;border-radius:5.5px 5.5px 0 0;"></div><div class="bx dk" style="left:228.0px;top:306.7px;width:39px;height:11.2px"></div><div class="r" style="left:236.3px;top:352px;width:3.6px;height:44px;background:#3a4358;border-radius:2px"></div><div class="r" style="left:237.0px;top:379px;width:2.3px;height:16px;background:#cb8f48"></div><div class="r" style="left:234.1px;top:366.5px;width:8px;height:13.5px;background:linear-gradient(#9ea3ad,#84899a 45%,#4a4f5e 50%,#8b909e 55%,#777c8b);border-radius:1.5px"></div><div class="r" style="left:255.6px;top:352px;width:3.4px;height:42.5px;border:0.8px solid #353e55;border-radius:2px;box-sizing:border-box;background:#141a2c"></div><div class="bx tab" style="left:279.2px;top:283.3px;width:45.8px;height:13.7px;"></div><div class="r" style="left:276.5px;top:302.8px;width:51.5px;height:100px;background:#11172b;border-radius:5.5px 5.5px 0 0;"></div><div class="bx dk" style="left:282.4px;top:306.7px;width:39px;height:11.2px"></div><div class="r" style="left:290.7px;top:352px;width:3.6px;height:44px;background:#3a4358;border-radius:2px"></div><div class="r" style="left:291.4px;top:379px;width:2.3px;height:16px;background:#cb8f48"></div><div class="r" style="left:288.5px;top:366.5px;width:8px;height:13.5px;background:linear-gradient(#9ea3ad,#84899a 45%,#4a4f5e 50%,#8b909e 55%,#777c8b);border-radius:1.5px"></div><div class="r" style="left:310.0px;top:352px;width:3.4px;height:42.5px;border:0.8px solid #353e55;border-radius:2px;box-sizing:border-box;background:#141a2c"></div><div class="bx tab" style="left:333.6px;top:283.3px;width:45.8px;height:13.7px;"></div><div class="r" style="left:330.9px;top:302.8px;width:51.5px;height:100px;background:#11172b;border-radius:5.5px 5.5px 0 0;"></div><div class="bx dk" style="left:336.8px;top:306.7px;width:39px;height:11.2px"></div><div class="r" style="left:345.1px;top:352px;width:3.6px;height:44px;background:#3a4358;border-radius:2px"></div><div class="r" style="left:345.8px;top:379px;width:2.3px;height:16px;background:#cb8f48"></div><div class="r" style="left:342.9px;top:366.5px;width:8px;height:13.5px;background:linear-gradient(#9ea3ad,#84899a 45%,#4a4f5e 50%,#8b909e 55%,#777c8b);border-radius:1.5px"></div><div class="r" style="left:364.4px;top:352px;width:3.4px;height:42.5px;border:0.8px solid #353e55;border-radius:2px;box-sizing:border-box;background:#141a2c"></div><div class="bx tab" style="left:388.0px;top:283.3px;width:45.8px;height:13.7px;"></div><div class="r" style="left:385.3px;top:302.8px;width:51.5px;height:100px;background:#11172b;border-radius:5.5px 5.5px 0 0;"></div><div class="bx dk" style="left:391.2px;top:306.7px;width:39px;height:11.2px"></div><div class="r" style="left:399.5px;top:352px;width:3.6px;height:44px;background:#3a4358;border-radius:2px"></div><div class="r" style="left:400.2px;top:379px;width:2.3px;height:16px;background:#cb8f48"></div><div class="r" style="left:397.3px;top:366.5px;width:8px;height:13.5px;background:linear-gradient(#9ea3ad,#84899a 45%,#4a4f5e 50%,#8b909e 55%,#777c8b);border-radius:1.5px"></div><div class="r" style="left:418.8px;top:352px;width:3.4px;height:42.5px;border:0.8px solid #353e55;border-radius:2px;box-sizing:border-box;background:#141a2c"></div><div class="bx tab" style="left:442.3px;top:283.3px;width:45.8px;height:13.7px;"></div><div class="r" style="left:439.6px;top:302.8px;width:51.5px;height:100px;background:#11172b;border-radius:5.5px 5.5px 0 0;"></div><div class="bx dk" style="left:445.5px;top:306.7px;width:39px;height:11.2px"></div><div class="r" style="left:453.8px;top:352px;width:3.6px;height:44px;background:#3a4358;border-radius:2px"></div><div class="r" style="left:454.5px;top:379px;width:2.3px;height:16px;background:#cb8f48"></div><div class="r" style="left:451.6px;top:366.5px;width:8px;height:13.5px;background:linear-gradient(#9ea3ad,#84899a 45%,#4a4f5e 50%,#8b909e 55%,#777c8b);border-radius:1.5px"></div><div class="r" style="left:473.1px;top:352px;width:3.4px;height:42.5px;border:0.8px solid #353e55;border-radius:2px;box-sizing:border-box;background:#141a2c"></div><div class="bx tab" style="left:496.7px;top:283.3px;width:45.8px;height:13.7px;"></div><div class="r" style="left:494.0px;top:302.8px;width:51.5px;height:100px;background:#11172b;border-radius:5.5px 5.5px 0 0;"></div><div class="bx dk" style="left:499.9px;top:306.7px;width:39px;height:11.2px"></div><div class="r" style="left:508.2px;top:352px;width:3.6px;height:44px;background:#3a4358;border-radius:2px"></div><div class="r" style="left:508.9px;top:379px;width:2.3px;height:16px;background:#cb8f48"></div><div class="r" style="left:506.0px;top:366.5px;width:8px;height:13.5px;background:linear-gradient(#9ea3ad,#84899a 45%,#4a4f5e 50%,#8b909e 55%,#777c8b);border-radius:1.5px"></div><div class="r" style="left:527.5px;top:352px;width:3.4px;height:42.5px;border:0.8px solid #353e55;border-radius:2px;box-sizing:border-box;background:#141a2c"></div><div class="bx tab" style="left:551.1px;top:283.3px;width:45.8px;height:13.7px;"></div><div class="r" style="left:548.4px;top:302.8px;width:51.5px;height:100px;background:#11172b;border-radius:5.5px 5.5px 0 0;"></div><div class="bx dk" style="left:554.3px;top:306.7px;width:39px;height:11.2px"></div><div class="r" style="left:562.6px;top:352px;width:3.6px;height:44px;background:#3a4358;border-radius:2px"></div><div class="r" style="left:563.3px;top:379px;width:2.3px;height:16px;background:#cb8f48"></div><div class="r" style="left:560.4px;top:366.5px;width:8px;height:13.5px;background:linear-gradient(#9ea3ad,#84899a 45%,#4a4f5e 50%,#8b909e 55%,#777c8b);border-radius:1.5px"></div><div class="r" style="left:581.9px;top:352px;width:3.4px;height:42.5px;border:0.8px solid #353e55;border-radius:2px;box-sizing:border-box;background:#141a2c"></div><div class="bx tab" style="left:605.5px;top:283.3px;width:45.8px;height:13.7px;"></div><div class="r" style="left:602.8px;top:302.8px;width:51.5px;height:100px;background:#11172b;border-radius:5.5px 5.5px 0 0;"></div><div class="bx dk" style="left:608.7px;top:306.7px;width:39px;height:11.2px"></div><div class="r" style="left:617.0px;top:352px;width:3.6px;height:44px;background:#3a4358;border-radius:2px"></div><div class="r" style="left:617.7px;top:379px;width:2.3px;height:16px;background:#cb8f48"></div><div class="r" style="left:614.8px;top:366.5px;width:8px;height:13.5px;background:linear-gradient(#9ea3ad,#84899a 45%,#4a4f5e 50%,#8b909e 55%,#777c8b);border-radius:1.5px"></div><div class="r" style="left:636.3px;top:352px;width:3.4px;height:42.5px;border:0.8px solid #353e55;border-radius:2px;box-sizing:border-box;background:#141a2c"></div><div class="r" style="left:658px;top:283.3px;width:71px;height:13.7px;border:1px solid #a9b8d6;border-radius:3px;box-sizing:border-box"></div><div class="bx tab tsel sq" style="left:658px;top:283.3px;width:35.5px;height:13.7px;"></div><div class="r" style="left:669.4px;top:325px;width:2.4px;height:80px;background:#cb8f48"></div><div class="r" style="left:666.5px;top:320px;width:8px;height:13.5px;background:linear-gradient(#a9aeb8,#8b90a0 40%,#4f5464 48%,#8f94a3 56%,#7d8292);border-radius:1.5px"></div><div class="bx dk" style="left:687px;top:306.6px;width:42px;height:11.3px;"></div><div class="bx dk" style="left:687px;top:347.6px;width:42px;height:11.3px;"></div><div class="bx dk" style="left:687px;top:376.6px;width:42px;height:11.3px;"></div></div>
<svg class="layer" width="735" height="400" viewBox="0 0 735 400"><text class="tabsel" x="30.20" y="292.55" text-anchor="middle">Sound 1</text><text class="ddw" x="14.00" y="314.59">Bus 1</text><path d="M41.90 310.60h4.8l-2.4 4z" fill="#eef0f6"/><path d="M12.74 335.66A8 8 0 1 1 24.06 335.66" fill="none" stroke="#5d6780" stroke-width="0.8"/><circle cx="18.40" cy="330" r="5.8" fill="url(#gg)"/><circle cx="18.40" cy="322" r="0.8" fill="#e8a54a"/><circle cx="18.40" cy="326.40" r="0.7" fill="#5a6070"/><path d="M34.94 335.66A8 8 0 1 1 46.26 335.66" fill="none" stroke="#5d6780" stroke-width="0.8"/><circle cx="40.60" cy="330" r="5.8" fill="url(#gg)"/><circle cx="38.05" cy="332.55" r="0.7" fill="#5a6070"/><text class="lbw" x="18.40" y="345.59" text-anchor="middle">Pan</text><text class="lbw" x="40.60" y="345.59" text-anchor="middle">Send</text><text class="lbw" x="10.60" y="403.49">1.00 dB</text><text class="tab" x="84.60" y="292.55" text-anchor="middle">Sound 2</text><text class="ddw" x="68.40" y="314.59">Bus 1</text><path d="M96.30 310.60h4.8l-2.4 4z" fill="#eef0f6"/><path d="M67.14 335.66A8 8 0 1 1 78.46 335.66" fill="none" stroke="#5d6780" stroke-width="0.8"/><circle cx="72.80" cy="330" r="5.8" fill="url(#gg)"/><circle cx="72.80" cy="322" r="0.8" fill="#e8a54a"/><circle cx="72.80" cy="326.40" r="0.7" fill="#5a6070"/><path d="M89.34 335.66A8 8 0 1 1 100.66 335.66" fill="none" stroke="#5d6780" stroke-width="0.8"/><circle cx="95.00" cy="330" r="5.8" fill="url(#gg)"/><circle cx="92.45" cy="332.55" r="0.7" fill="#5a6070"/><text class="lbw" x="72.80" y="345.59" text-anchor="middle">Pan</text><text class="lbw" x="95.00" y="345.59" text-anchor="middle">Send</text><text class="lbw" x="65.00" y="403.49">1.00 dB</text><text class="tab" x="139.00" y="292.55" text-anchor="middle">Sound 3</text><text class="ddw" x="122.80" y="314.59">Bus 1</text><path d="M150.70 310.60h4.8l-2.4 4z" fill="#eef0f6"/><path d="M121.54 335.66A8 8 0 1 1 132.86 335.66" fill="none" stroke="#5d6780" stroke-width="0.8"/><circle cx="127.20" cy="330" r="5.8" fill="url(#gg)"/><circle cx="127.20" cy="322" r="0.8" fill="#e8a54a"/><circle cx="127.20" cy="326.40" r="0.7" fill="#5a6070"/><path d="M143.74 335.66A8 8 0 1 1 155.06 335.66" fill="none" stroke="#5d6780" stroke-width="0.8"/><circle cx="149.40" cy="330" r="5.8" fill="url(#gg)"/><circle cx="146.85" cy="332.55" r="0.7" fill="#5a6070"/><text class="lbw" x="127.20" y="345.59" text-anchor="middle">Pan</text><text class="lbw" x="149.40" y="345.59" text-anchor="middle">Send</text><text class="lbw" x="119.40" y="403.49">1.00 dB</text><text class="tab" x="193.30" y="292.55" text-anchor="middle">Sound 4</text><text class="ddw" x="177.10" y="314.59">Bus 1</text><path d="M205.00 310.60h4.8l-2.4 4z" fill="#eef0f6"/><path d="M175.84 335.66A8 8 0 1 1 187.16 335.66" fill="none" stroke="#5d6780" stroke-width="0.8"/><circle cx="181.50" cy="330" r="5.8" fill="url(#gg)"/><circle cx="181.50" cy="322" r="0.8" fill="#e8a54a"/><circle cx="181.50" cy="326.40" r="0.7" fill="#5a6070"/><path d="M198.04 335.66A8 8 0 1 1 209.36 335.66" fill="none" stroke="#5d6780" stroke-width="0.8"/><circle cx="203.70" cy="330" r="5.8" fill="url(#gg)"/><circle cx="201.15" cy="332.55" r="0.7" fill="#5a6070"/><text class="lbw" x="181.50" y="345.59" text-anchor="middle">Pan</text><text class="lbw" x="203.70" y="345.59" text-anchor="middle">Send</text><text class="lbw" x="173.70" y="403.49">1.00 dB</text><text class="tab" x="247.70" y="292.55" text-anchor="middle">Sound 5</text><text class="ddw" x="231.50" y="314.59">Bus 1</text><path d="M259.40 310.60h4.8l-2.4 4z" fill="#eef0f6"/><path d="M230.24 335.66A8 8 0 1 1 241.56 335.66" fill="none" stroke="#5d6780" stroke-width="0.8"/><circle cx="235.90" cy="330" r="5.8" fill="url(#gg)"/><circle cx="235.90" cy="322" r="0.8" fill="#e8a54a"/><circle cx="235.90" cy="326.40" r="0.7" fill="#5a6070"/><path d="M252.44 335.66A8 8 0 1 1 263.76 335.66" fill="none" stroke="#5d6780" stroke-width="0.8"/><circle cx="258.10" cy="330" r="5.8" fill="url(#gg)"/><circle cx="255.55" cy="332.55" r="0.7" fill="#5a6070"/><text class="lbw" x="235.90" y="345.59" text-anchor="middle">Pan</text><text class="lbw" x="258.10" y="345.59" text-anchor="middle">Send</text><text class="lbw" x="228.10" y="403.49">1.00 dB</text><text class="tab" x="302.10" y="292.55" text-anchor="middle">Sound 6</text><text class="ddw" x="285.90" y="314.59">Bus 1</text><path d="M313.80 310.60h4.8l-2.4 4z" fill="#eef0f6"/><path d="M284.64 335.66A8 8 0 1 1 295.96 335.66" fill="none" stroke="#5d6780" stroke-width="0.8"/><circle cx="290.30" cy="330" r="5.8" fill="url(#gg)"/><circle cx="290.30" cy="322" r="0.8" fill="#e8a54a"/><circle cx="290.30" cy="326.40" r="0.7" fill="#5a6070"/><path d="M306.84 335.66A8 8 0 1 1 318.16 335.66" fill="none" stroke="#5d6780" stroke-width="0.8"/><circle cx="312.50" cy="330" r="5.8" fill="url(#gg)"/><circle cx="309.95" cy="332.55" r="0.7" fill="#5a6070"/><text class="lbw" x="290.30" y="345.59" text-anchor="middle">Pan</text><text class="lbw" x="312.50" y="345.59" text-anchor="middle">Send</text><text class="lbw" x="282.50" y="403.49">1.00 dB</text><text class="tab" x="356.50" y="292.55" text-anchor="middle">Sound 7</text><text class="ddw" x="340.30" y="314.59">Bus 1</text><path d="M368.20 310.60h4.8l-2.4 4z" fill="#eef0f6"/><path d="M339.04 335.66A8 8 0 1 1 350.36 335.66" fill="none" stroke="#5d6780" stroke-width="0.8"/><circle cx="344.70" cy="330" r="5.8" fill="url(#gg)"/><circle cx="344.70" cy="322" r="0.8" fill="#e8a54a"/><circle cx="344.70" cy="326.40" r="0.7" fill="#5a6070"/><path d="M361.24 335.66A8 8 0 1 1 372.56 335.66" fill="none" stroke="#5d6780" stroke-width="0.8"/><circle cx="366.90" cy="330" r="5.8" fill="url(#gg)"/><circle cx="364.35" cy="332.55" r="0.7" fill="#5a6070"/><text class="lbw" x="344.70" y="345.59" text-anchor="middle">Pan</text><text class="lbw" x="366.90" y="345.59" text-anchor="middle">Send</text><text class="lbw" x="336.90" y="403.49">1.00 dB</text><text class="tab" x="410.90" y="292.55" text-anchor="middle">Sound 8</text><text class="ddw" x="394.70" y="314.59">Bus 1</text><path d="M422.60 310.60h4.8l-2.4 4z" fill="#eef0f6"/><path d="M393.44 335.66A8 8 0 1 1 404.76 335.66" fill="none" stroke="#5d6780" stroke-width="0.8"/><circle cx="399.10" cy="330" r="5.8" fill="url(#gg)"/><circle cx="399.10" cy="322" r="0.8" fill="#e8a54a"/><circle cx="399.10" cy="326.40" r="0.7" fill="#5a6070"/><path d="M415.64 335.66A8 8 0 1 1 426.96 335.66" fill="none" stroke="#5d6780" stroke-width="0.8"/><circle cx="421.30" cy="330" r="5.8" fill="url(#gg)"/><circle cx="418.75" cy="332.55" r="0.7" fill="#5a6070"/><text class="lbw" x="399.10" y="345.59" text-anchor="middle">Pan</text><text class="lbw" x="421.30" y="345.59" text-anchor="middle">Send</text><text class="lbw" x="391.30" y="403.49">1.00 dB</text><text class="tab" x="465.20" y="292.55" text-anchor="middle">Sound 9</text><text class="ddw" x="449.00" y="314.59">Bus 1</text><path d="M476.90 310.60h4.8l-2.4 4z" fill="#eef0f6"/><path d="M447.74 335.66A8 8 0 1 1 459.06 335.66" fill="none" stroke="#5d6780" stroke-width="0.8"/><circle cx="453.40" cy="330" r="5.8" fill="url(#gg)"/><circle cx="453.40" cy="322" r="0.8" fill="#e8a54a"/><circle cx="453.40" cy="326.40" r="0.7" fill="#5a6070"/><path d="M469.94 335.66A8 8 0 1 1 481.26 335.66" fill="none" stroke="#5d6780" stroke-width="0.8"/><circle cx="475.60" cy="330" r="5.8" fill="url(#gg)"/><circle cx="473.05" cy="332.55" r="0.7" fill="#5a6070"/><text class="lbw" x="453.40" y="345.59" text-anchor="middle">Pan</text><text class="lbw" x="475.60" y="345.59" text-anchor="middle">Send</text><text class="lbw" x="445.60" y="403.49">1.00 dB</text><text class="tab" x="519.60" y="292.55" text-anchor="middle">Sound 10</text><text class="ddw" x="503.40" y="314.59">Bus 1</text><path d="M531.30 310.60h4.8l-2.4 4z" fill="#eef0f6"/><path d="M502.14 335.66A8 8 0 1 1 513.46 335.66" fill="none" stroke="#5d6780" stroke-width="0.8"/><circle cx="507.80" cy="330" r="5.8" fill="url(#gg)"/><circle cx="507.80" cy="322" r="0.8" fill="#e8a54a"/><circle cx="507.80" cy="326.40" r="0.7" fill="#5a6070"/><path d="M524.34 335.66A8 8 0 1 1 535.66 335.66" fill="none" stroke="#5d6780" stroke-width="0.8"/><circle cx="530.00" cy="330" r="5.8" fill="url(#gg)"/><circle cx="527.45" cy="332.55" r="0.7" fill="#5a6070"/><text class="lbw" x="507.80" y="345.59" text-anchor="middle">Pan</text><text class="lbw" x="530.00" y="345.59" text-anchor="middle">Send</text><text class="lbw" x="500.00" y="403.49">1.00 dB</text><text class="tab" x="574.00" y="292.55" text-anchor="middle">Sound 11</text><text class="ddw" x="557.80" y="314.59">Bus 1</text><path d="M585.70 310.60h4.8l-2.4 4z" fill="#eef0f6"/><path d="M556.54 335.66A8 8 0 1 1 567.86 335.66" fill="none" stroke="#5d6780" stroke-width="0.8"/><circle cx="562.20" cy="330" r="5.8" fill="url(#gg)"/><circle cx="562.20" cy="322" r="0.8" fill="#e8a54a"/><circle cx="562.20" cy="326.40" r="0.7" fill="#5a6070"/><path d="M578.74 335.66A8 8 0 1 1 590.06 335.66" fill="none" stroke="#5d6780" stroke-width="0.8"/><circle cx="584.40" cy="330" r="5.8" fill="url(#gg)"/><circle cx="581.85" cy="332.55" r="0.7" fill="#5a6070"/><text class="lbw" x="562.20" y="345.59" text-anchor="middle">Pan</text><text class="lbw" x="584.40" y="345.59" text-anchor="middle">Send</text><text class="lbw" x="554.40" y="403.49">1.00 dB</text><text class="tab" x="628.40" y="292.55" text-anchor="middle">Sound 12</text><text class="ddw" x="612.20" y="314.59">Bus 1</text><path d="M640.10 310.60h4.8l-2.4 4z" fill="#eef0f6"/><path d="M610.94 335.66A8 8 0 1 1 622.26 335.66" fill="none" stroke="#5d6780" stroke-width="0.8"/><circle cx="616.60" cy="330" r="5.8" fill="url(#gg)"/><circle cx="616.60" cy="322" r="0.8" fill="#e8a54a"/><circle cx="616.60" cy="326.40" r="0.7" fill="#5a6070"/><path d="M633.14 335.66A8 8 0 1 1 644.46 335.66" fill="none" stroke="#5d6780" stroke-width="0.8"/><circle cx="638.80" cy="330" r="5.8" fill="url(#gg)"/><circle cx="636.25" cy="332.55" r="0.7" fill="#5a6070"/><text class="lbw" x="616.60" y="345.59" text-anchor="middle">Pan</text><text class="lbw" x="638.80" y="345.59" text-anchor="middle">Send</text><text class="lbw" x="608.80" y="403.49">1.00 dB</text><text class="tabsel" x="675.75" y="292.55" text-anchor="middle">1 - 12</text><text class="tab" x="711.00" y="292.60" text-anchor="middle">13 - 24</text><text class="btw" x="708.00" y="314.72" text-anchor="middle">440.0Hz</text><text class="lbw" x="708.00" y="326.29" text-anchor="middle">Master Tune</text><text class="pl" x="689.30" y="341.96">Playing:</text><text class="pl" x="719.80" y="341.96">0</text><text class="btw" x="708.00" y="355.72" text-anchor="middle">24</text><text class="lbw" x="708.00" y="367.29" text-anchor="middle">Voices</text><text class="btw" x="708.00" y="384.72" text-anchor="middle">Multi Out</text></svg></div>
</body></html>
